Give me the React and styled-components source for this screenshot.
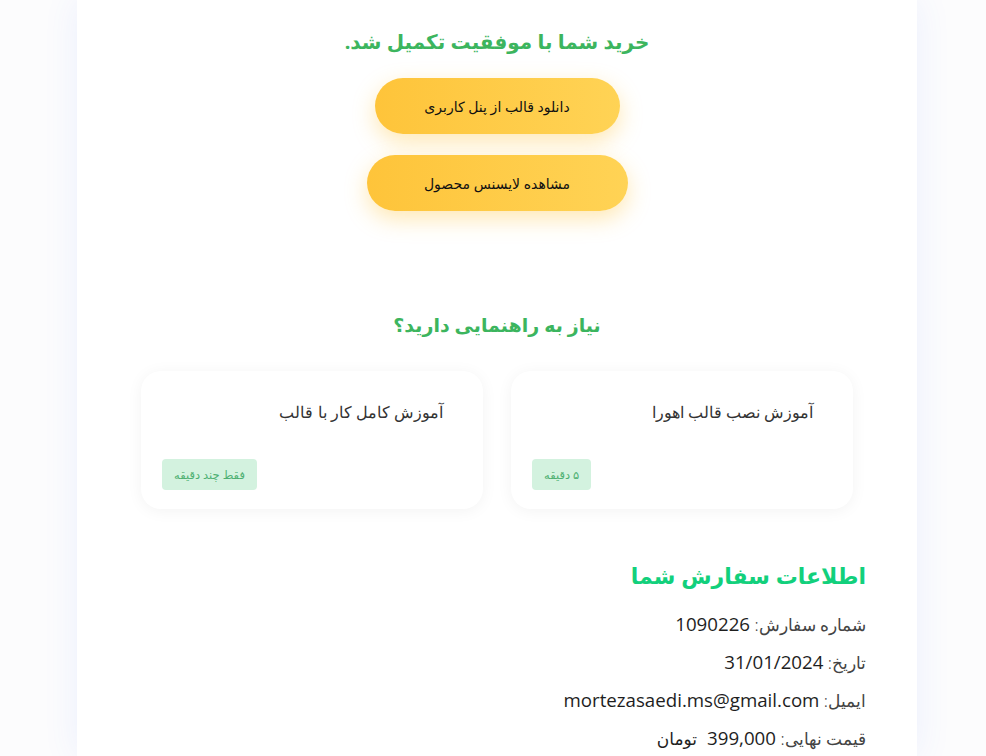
import styled, { createGlobalStyle } from "styled-components";

const GlobalStyle = createGlobalStyle`
  body {
    margin: 0;
    background: #fcfcfd;
    font-family: "Noto Sans", "DejaVu Sans", sans-serif;
  }
`;

const Page = styled.div`
  padding: 0 69px 0 77px;
  height: 756px;
  overflow: hidden;
`;

const Panel = styled.main`
  direction: rtl;
  background: #fff;
  min-height: 756px;
  box-shadow: 0 0 34px rgba(70, 110, 255, 0.09);
  padding: 26px 51px 0;
  box-sizing: border-box;
`;

const Center = styled.section`
  display: flex;
  flex-direction: column;
  align-items: center;
`;

const GreenTitle = styled.h2`
  margin: 0;
  color: #3cb55e;
  font-size: ${(p) => p.size || 20}px;
  font-weight: 700;
  line-height: 32px;
`;

const Buttons = styled.div`
  display: flex;
  flex-direction: column;
  align-items: center;
  gap: 21px;
  margin-top: 20px;
`;

const YellowBtn = styled.button`
  height: 56px;
  width: ${(p) => p.w}px;
  border: none;
  border-radius: 28px;
  background: linear-gradient(90deg, #fec43a, #ffd355);
  box-shadow: 0 8px 22px rgba(255, 190, 40, 0.35);
  font-family: inherit;
  font-size: 14px;
  color: #111;
  cursor: pointer;
`;

const HelpTitle = styled(GreenTitle)`
  margin-top: 98px;
`;

const Cards = styled.div`
  display: flex;
  gap: 28px;
  margin-top: 30px;
`;

const Card = styled.div`
  width: 342px;
  height: 138px;
  box-sizing: border-box;
  background: #fff;
  border-radius: 20px;
  box-shadow: 0 2px 16px rgba(0, 0, 0, 0.05);
  padding: 30px 40px 19px 21px;
  display: flex;
  flex-direction: column;
  justify-content: space-between;
`;

const CardTitle = styled.div`
  font-size: 16px;
  color: #333;
  font-weight: 300;
`;

const Badge = styled.span`
  align-self: flex-end;
  background: #d3f2df;
  color: #4eb072;
  font-size: 11.5px;
  padding: 0 12px;
  height: 31px;
  line-height: 31px;
  border-radius: 4px;
`;

const Info = styled.section`
  margin-top: 48px;
`;

const InfoTitle = styled.h3`
  margin: 0 0 12px;
  color: #12d07c;
  font-size: 22px;
  font-weight: 800;
  line-height: 36px;
`;

const Line = styled.p`
  margin: 0;
  font-size: 17px;
  line-height: 37px;
  color: #444;
  font-weight: 300;
`;

const Value = styled.span`
  font-family: "Open Sans", "Noto Sans", sans-serif;
  font-size: 18.7px;
  color: #1e1e1e;
  font-weight: 500;
`;

const Toman = styled.b`
  color: #1e1e1e;
  margin-right: 10px;
`;

const guides = [
  { title: "آموزش نصب قالب اهورا", time: "۵ دقیقه" },
  { title: "آموزش کامل کار با قالب", time: "فقط چند دقیقه" },
];

export default function App() {
  return (
    <Page>
      <GlobalStyle />
      <Panel>
        <Center>
          <GreenTitle>خرید شما با موفقیت تکمیل شد.</GreenTitle>
          <Buttons>
            <YellowBtn w={245}>دانلود قالب از پنل کاربری</YellowBtn>
            <YellowBtn w={261}>مشاهده لایسنس محصول</YellowBtn>
          </Buttons>
          <HelpTitle size={19}>نیاز به راهنمایی دارید؟</HelpTitle>
          <Cards>
            {guides.map((g) => (
              <Card key={g.title}>
                <CardTitle>{g.title}</CardTitle>
                <Badge>{g.time}</Badge>
              </Card>
            ))}
          </Cards>
        </Center>
        <Info>
          <InfoTitle>اطلاعات سفارش شما</InfoTitle>
          <Line>شماره سفارش: <Value>1090226</Value></Line>
          <Line>تاریخ: <Value>31/01/2024</Value></Line>
          <Line>ایمیل: <Value>mortezasaedi.ms@gmail.com</Value></Line>
          <Line>
            قیمت نهایی: <Value>399,000</Value>
            <Toman>تومان</Toman>
          </Line>
        </Info>
      </Panel>
    </Page>
  );
}
